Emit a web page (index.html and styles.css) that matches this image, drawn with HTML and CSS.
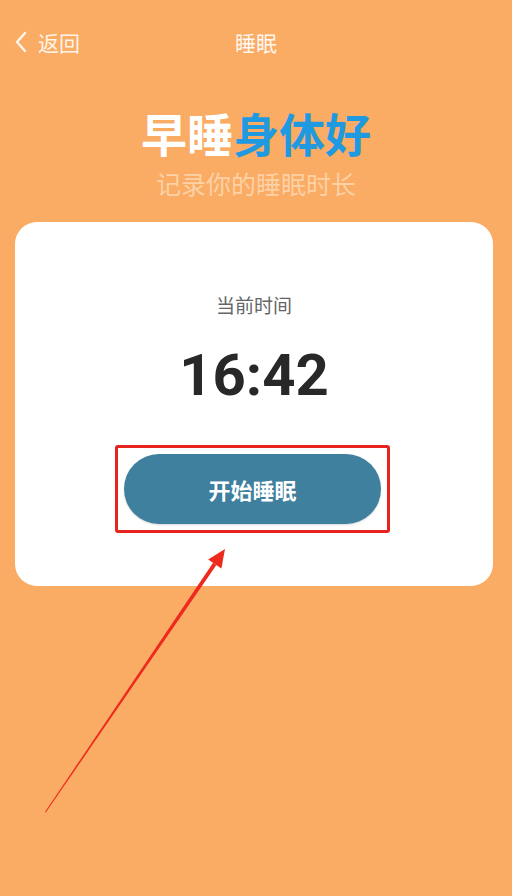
FILE: index.html
```html
<!DOCTYPE html>
<html lang="zh">
<head>
<meta charset="utf-8">
<link rel="stylesheet" href="styles.css">
</head>
<body>
<div class="page">
  <div class="nav">
    <div class="back">
      <svg class="chev" width="14" height="22" viewBox="0 0 14 22"><polyline points="11,2 3,11 11,20" fill="none" stroke="#fff6ec" stroke-width="2.4" stroke-linecap="round" stroke-linejoin="round"/></svg>
      <span>返回</span>
    </div>
    <div class="title">睡眠</div>
  </div>
  <h1 class="headline"><span class="w">早睡</span><span class="b">身体好</span></h1>
  <p class="sub">记录你的睡眠时长</p>
  <div class="card">
    <div class="label">当前时间</div>
    <div class="time">16:42</div>
    <div class="hl">
      <div class="btn">开始睡眠</div>
    </div>
  </div>
  <svg class="arrow" width="512" height="896" viewBox="0 0 512 896">
    <polygon points="45,812 213.1,562.8 216.4,565.0 45.8,812.4" fill="#ee2a1c"/>
    <polygon points="225,549 221.4,568.4 208.2,559.4" fill="#ee2a1c"/>
  </svg>
</div>
</body>
</html>
```
FILE: styles.css
```css
html, body {
  margin: 0;
  padding: 0;
}
body {
  background: #faab64;
  font-family: "Noto Sans CJK SC", Roboto, sans-serif;
}
.page {
  position: relative;
  width: 512px;
  height: 896px;
  overflow: hidden;
}
.nav {
  position: relative;
  height: 24px;
  padding-top: 30px;
  display: flex;
  justify-content: center;
  align-items: center;
}
.back {
  position: absolute;
  left: 14px;
  top: 30px;
  height: 24px;
  display: flex;
  align-items: center;
  gap: 10px;
  color: #fff4e8;
  font-size: 21px;
}
.chev {
  display: block;
}
.back span {
  line-height: 24px;
}
.title {
  color: #fff8f0;
  font-size: 21px;
  line-height: 24px;
}
.headline {
  margin: 55px 0 0;
  text-align: center;
  font-size: 46px;
  line-height: 46px;
  font-weight: 700;
}
.headline .w { color: #ffffff; }
.headline .b { color: #1f9ae0; }
.sub {
  margin: 15px 0 0;
  text-align: center;
  font-size: 25px;
  line-height: 26px;
  color: #fdd1a4;
}
.card {
  margin: 26px 19px 0 15px;
  height: 364px;
  box-sizing: border-box;
  background: #ffffff;
  border-radius: 22px;
  padding-top: 73px;
  display: flex;
  flex-direction: column;
  align-items: center;
}
.label {
  font-size: 19px;
  line-height: 20px;
  color: #666666;
}
.time {
  margin-top: 31px;
  font-family: Roboto, sans-serif;
  font-weight: 700;
  font-size: 58px;
  line-height: 58px;
  color: #282828;
}
.hl {
  margin-top: 41px;
  margin-right: 3px;
  border: 3px solid #e6231e;
  border-radius: 3px;
  padding: 6px 6px;
  width: 257px;
}
.btn {
  height: 70px;
  border-radius: 35px;
  background: #3e809e;
  color: #ffffff;
  font-size: 22px;
  font-weight: 700;
  display: flex;
  align-items: center;
  justify-content: center;
  box-shadow: 0 1px 2px rgba(0,0,0,0.15);
}
.arrow {
  position: absolute;
  left: 0;
  top: 0;
  pointer-events: none;
}
```
